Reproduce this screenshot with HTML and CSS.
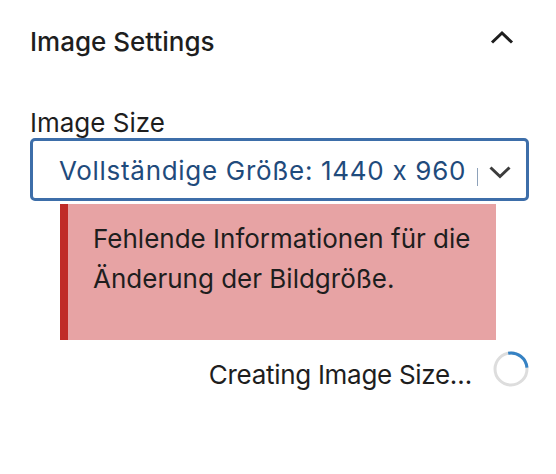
FILE: index.html
```html
<!DOCTYPE html>
<html lang="de">
<head>
<meta charset="utf-8">
<link rel="stylesheet" href="styles.css">
</head>
<body>
<div class="panel">
  <div class="panel-head">
    <h2 class="panel-title">Image Settings</h2>
    <svg class="chev-up" width="24" height="24" viewBox="0 0 24 24"><path d="M2 16.5 L12 7 L22 16.5" fill="none" stroke="#1e1e1e" stroke-width="3"/></svg>
  </div>
  <label class="field-label">Image Size</label>
  <div class="select">
    <span class="select-value">Vollständige Größe: 1440 x 960</span>
    <span class="select-clip"></span>
    <svg class="chev-down" width="24" height="24" viewBox="0 0 24 24"><path d="M2.5 8.5 L12 17.5 L21.5 8.5" fill="none" stroke="#3c3c3c" stroke-width="3"/></svg>
  </div>
  <div class="notice">
    <p class="notice-text">Fehlende Informationen für die Änderung der Bildgröße.</p>
  </div>
  <div class="status">
    <span class="status-text">Creating Image Size…</span>
    <svg class="spinner" width="36" height="36" viewBox="0 0 36 36">
      <circle cx="18" cy="18" r="16" fill="none" stroke="#dddddd" stroke-width="3"/>
      <path d="M15.2 2.24 A16 16 0 0 1 33.94 16.6" fill="none" stroke="#3582c4" stroke-width="3"/>
    </svg>
  </div>
</div>
</body>
</html>
```
FILE: styles.css
```css
html, body {
  margin: 0;
  padding: 0;
  background: #ffffff;
}
body {
  font-family: Inter, "Noto Sans", "Liberation Sans", sans-serif;
  font-feature-settings: "calt" 0;
  color: #1e1e1e;
}
.panel {
  width: 556px;
  height: 474px;
  box-sizing: border-box;
  padding: 26px 27px 0 30px;
  display: flex;
  flex-direction: column;
}
.panel-head {
  display: flex;
  justify-content: space-between;
  align-items: flex-start;
  padding-right: 15px;
}
.panel-title {
  margin: 0;
  font-size: 26px;
  line-height: 32px;
  font-weight: 500;
  color: #1e1e1e;
}
.chev-up {
  display: block;
}
.field-label {
  margin-top: 50px;
  font-size: 26px;
  line-height: 30px;
  color: #1e1e1e;
}
.select {
  height: 63px;
  box-sizing: border-box;
  border: 3px solid #3d6ea9;
  border-radius: 5px;
  display: flex;
  align-items: center;
  padding: 0 14px 0 26px;
}
.select-value {
  flex: 0 0 auto;
  font-size: 26px;
  line-height: 32px;
  letter-spacing: 0.7px;
  padding-top: 2px;
  color: #1f4b7c;
  white-space: nowrap;
}
.select-clip {
  width: 1px;
  height: 18px;
  background: #8ea2ba;
  margin: 14px 10px 0 auto;
}
.chev-down {
  display: block;
  margin-top: 3px;
}
.notice {
  margin: 3px 0 0 30px;
  width: 436px;
  height: 136px;
  box-sizing: border-box;
  background: #e7a3a4;
  border-left: 8px solid #c02b27;
  padding: 15px 20px 0 25px;
}
.notice-text {
  margin: 0;
  font-size: 26px;
  line-height: 40px;
  color: #1e1e1e;
}
.status {
  margin-top: 11px;
  display: flex;
  justify-content: flex-end;
  align-items: flex-start;
}
.status-text {
  margin-top: 8px;
  margin-right: 21px;
  font-size: 26px;
  line-height: 32px;
  letter-spacing: -0.3px;
  color: #1e1e1e;
}
.spinner {
  display: block;
}
```
